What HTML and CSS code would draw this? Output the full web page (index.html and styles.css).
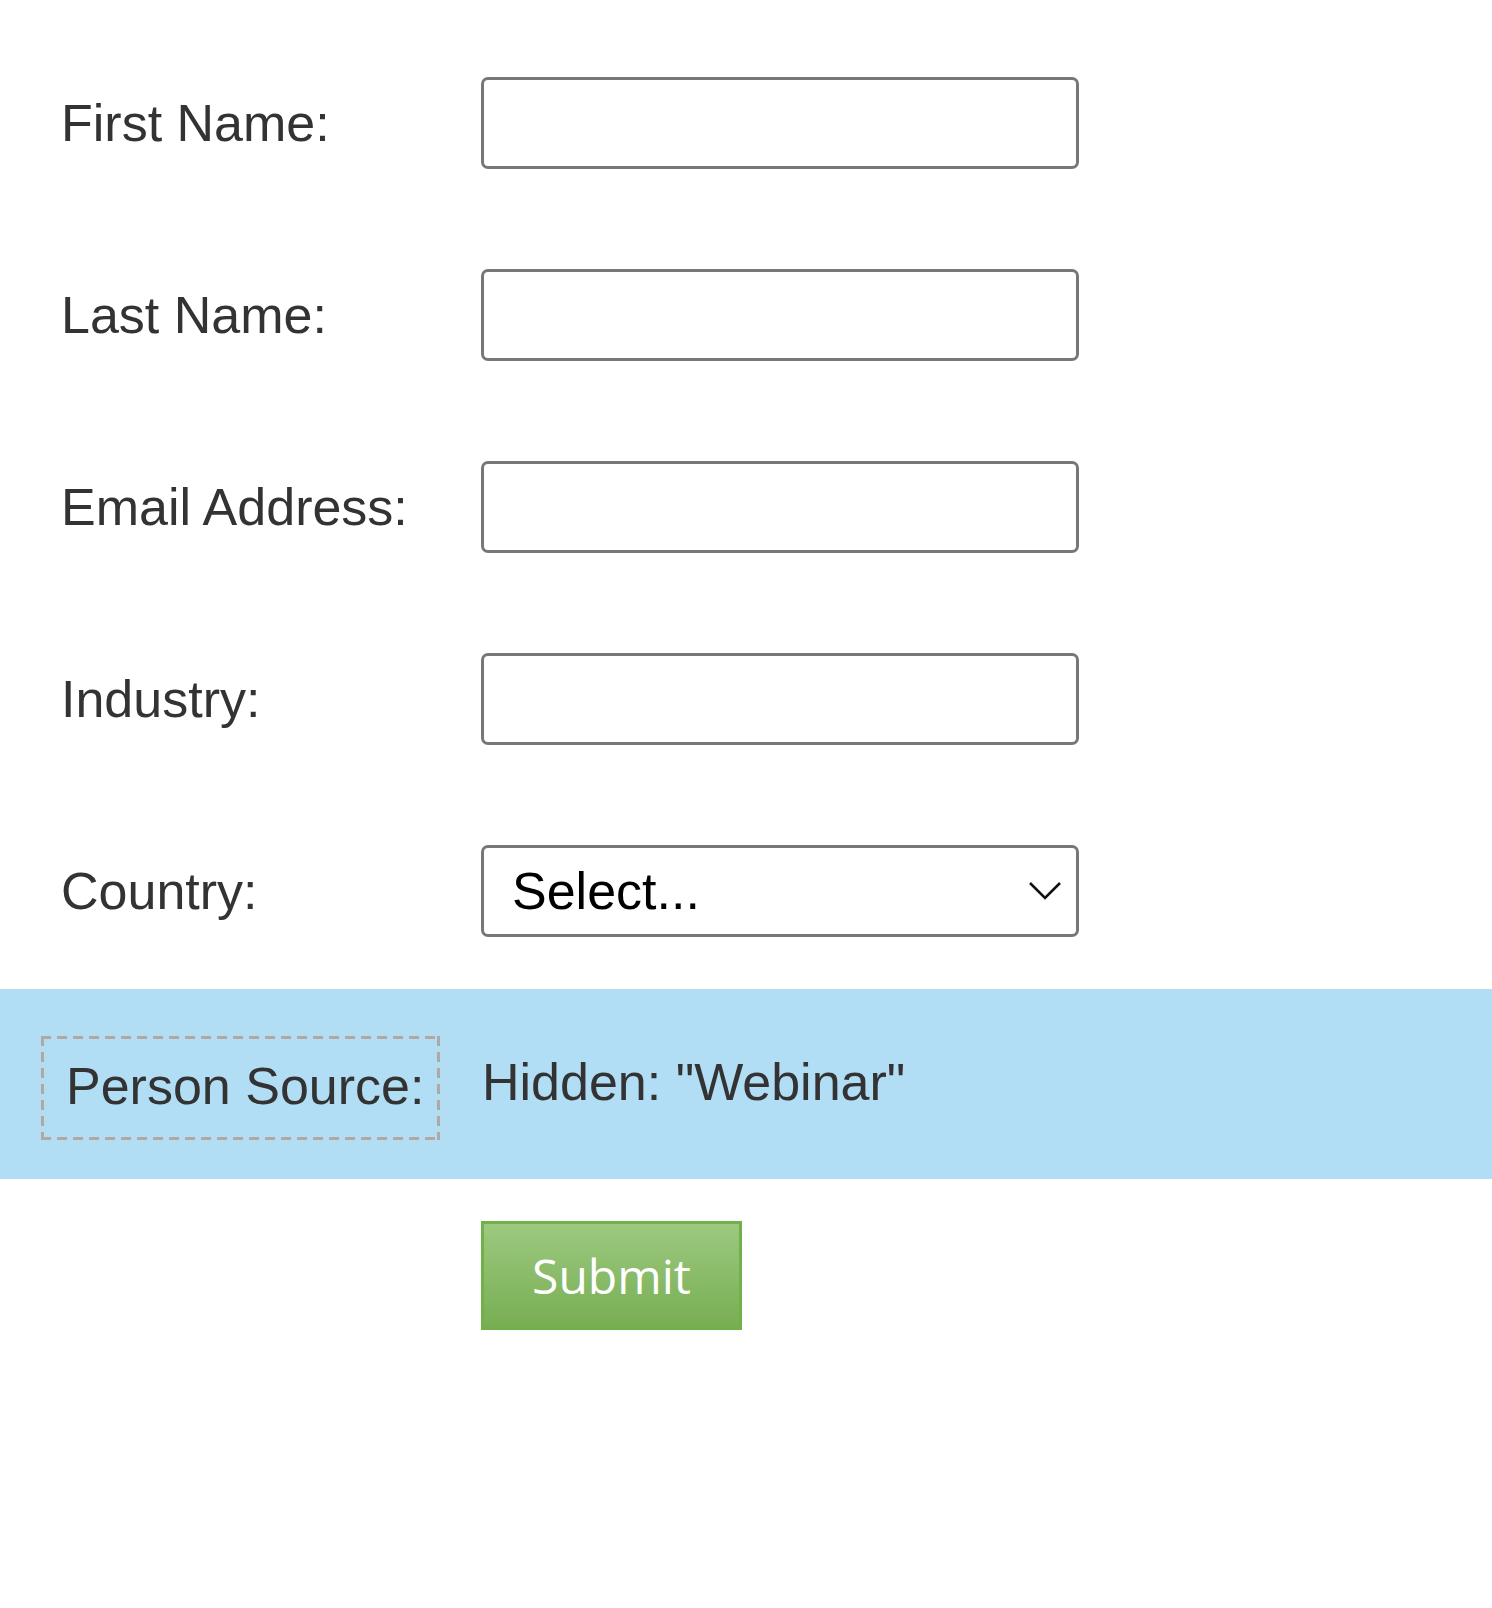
FILE: index.html
```html
<!DOCTYPE html>
<html lang="en">
<head>
<meta charset="utf-8">
<title>Form</title>
<link rel="stylesheet" href="styles.css">
</head>
<body>
<form class="form">
  <div class="row">
    <label class="label">First Name:</label>
    <input class="field" type="text">
  </div>
  <div class="row">
    <label class="label">Last Name:</label>
    <input class="field" type="text">
  </div>
  <div class="row">
    <label class="label">Email Address:</label>
    <input class="field" type="text">
  </div>
  <div class="row">
    <label class="label">Industry:</label>
    <input class="field" type="text">
  </div>
  <div class="row row-last">
    <label class="label">Country:</label>
    <div class="select-wrap">
      <select class="field select"><option>Select...</option></select>
      <svg class="chevron" width="34" height="22" viewBox="0 0 34 22"><path d="M2 3 L17 18 L32 3" fill="none" stroke="#111" stroke-width="2.6"/></svg>
    </div>
  </div>
  <div class="hidden-band">
    <div class="hidden-label">Person Source:</div>
    <div class="hidden-value">Hidden: "Webinar"</div>
  </div>
  <div class="actions">
    <button class="submit" type="button">Submit</button>
  </div>
</form>
</body>
</html>
```
FILE: styles.css
```css
html, body {
  margin: 0;
  padding: 0;
  background: #ffffff;
}
.form {
  font-family: "Liberation Sans", Arial, sans-serif;
  color: #333333;
  padding-top: 77px;
}
.row {
  display: flex;
  align-items: center;
  height: 92px;
  margin-bottom: 100px;
}
.row-last {
  margin-bottom: 52px;
}
.label {
  width: 420px;
  padding-left: 61px;
  font-size: 52px;
  color: #333333;
}
.field {
  box-sizing: border-box;
  width: 598px;
  height: 92px;
  border: 3px solid #777777;
  border-radius: 7px;
  background: #ffffff;
  margin: 0;
  padding: 0 28px;
  font-family: "Liberation Sans", Arial, sans-serif;
  font-size: 52px;
  color: #000000;
  outline: none;
}
.select-wrap {
  position: relative;
  width: 598px;
  height: 92px;
}
.select {
  appearance: none;
  -webkit-appearance: none;
  padding-left: 28px;
}
.chevron {
  position: absolute;
  right: 17px;
  top: 35px;
}
.hidden-band {
  display: flex;
  align-items: center;
  background: #b1ddf5;
  height: 190px;
  box-sizing: border-box;
  padding-top: 8px;
}
.hidden-label {
  box-sizing: border-box;
  margin-left: 41px;
  width: 399px;
  height: 104px;
  background-image:
    repeating-linear-gradient(to right, #b0a8a2 0 10px, transparent 10px 16px),
    repeating-linear-gradient(to right, #b0a8a2 0 10px, transparent 10px 16px),
    repeating-linear-gradient(to bottom, #b0a8a2 0 10px, transparent 10px 16px),
    repeating-linear-gradient(to bottom, #b0a8a2 0 10px, transparent 10px 16px);
  background-size: 100% 3px, 100% 3px, 3px 100%, 3px 100%;
  background-position: left top, left bottom, left top, right top;
  background-repeat: no-repeat;
  padding-left: 25px;
  padding-bottom: 4px;
  display: flex;
  align-items: center;
  font-size: 52px;
  color: #333333;
}
.hidden-value {
  margin-left: 42px;
  font-size: 52px;
  color: #333333;
  margin-top: -12px;
}
.actions {
  padding-left: 481px;
  padding-top: 42px;
}
.submit {
  box-sizing: border-box;
  width: 261px;
  height: 109px;
  border: 3px solid #72b04a;
  background: linear-gradient(#9cc97f, #78ae53);
  color: #ffffff;
  font-family: "Open Sans", sans-serif;
  font-size: 48px;
  padding: 0;
  margin: 0;
}
```
